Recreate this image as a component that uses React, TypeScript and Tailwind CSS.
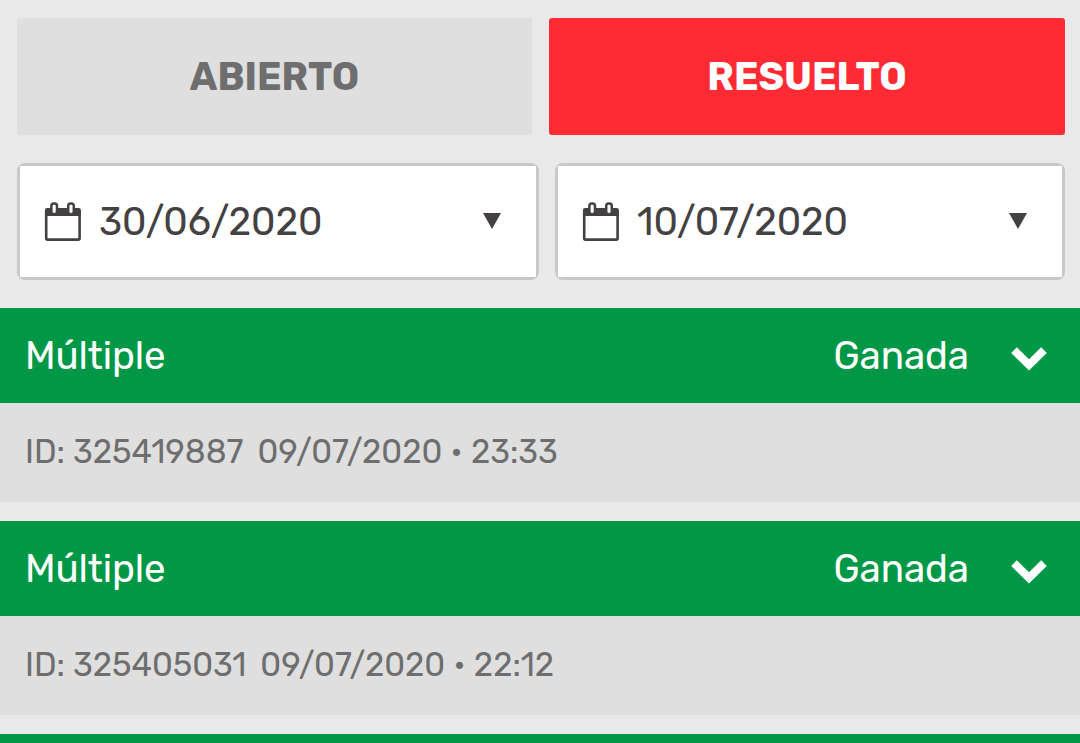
import React from 'react';

const bets = [
  { id: '325419887', date: '09/07/2020', time: '23:33', type: 'Múltiple', status: 'Ganada' },
  { id: '325405031', date: '09/07/2020', time: '22:12', type: 'Múltiple', status: 'Ganada' },
  { id: '', date: '', time: '', type: '', status: '' },
];

function CalendarIcon() {
  return (
    <svg width="38" height="40" viewBox="0 0 38 40" className="shrink-0" fill="none">
      <rect x="2.2" y="8" width="33.4" height="29.6" rx="1.4" stroke="#434142" strokeWidth="2.6" />
      <path d="M3 6h31.8a2 2 0 0 1 2 2v6H1V8a2 2 0 0 1 2-2z" fill="#434142" />
      <rect x="7.4" y="1.6" width="5.6" height="10.6" rx="2.4" fill="#fff" stroke="#434142" strokeWidth="2.5" />
      <rect x="24.2" y="1.6" width="5.6" height="10.6" rx="2.4" fill="#fff" stroke="#434142" strokeWidth="2.5" />
    </svg>
  );
}

function DateField({ value, className }: { value: string; className: string }) {
  return (
    <button className={`h-[117px] rounded-lg bg-[#c8c8c8] p-[3px] text-[#434142] ${className}`}>
      <span className="flex h-full items-center bg-white pr-[35px] pl-6">
        <CalendarIcon />
        <span className="ml-[17px] pt-0.5 text-[38.5px] leading-none tracking-[-0.1px]">{value}</span>
        <svg width="18" height="16" viewBox="0 0 18 16" className="mb-px ml-auto" fill="#434142">
          <path d="M0 0h18L9 16z" />
        </svg>
      </span>
    </button>
  );
}

export default function App() {
  return (
    <div className="h-[743px] w-[1080px] overflow-hidden bg-[#e9e9e9] font-['Rubik','Roboto',sans-serif]">
      <div className="flex gap-[17px] pt-[18px] pr-[15px] pl-[17px]">
        <button className="h-[117px] w-[515px] rounded-[3px] bg-[#dfdfdf] pt-0.5 text-[38.5px] font-bold text-[#6e6e6e]">
          ABIERTO
        </button>
        <button className="h-[117px] w-[516px] rounded-[3px] bg-[#ff2b34] pt-0.5 text-[38.5px] font-bold text-white">
          RESUELTO
        </button>
      </div>

      <div className="flex justify-between pt-7 pr-[15px] pb-7 pl-[17px]">
        <DateField value="30/06/2020" className="w-[522px]" />
        <DateField value="10/07/2020" className="w-[510px]" />
      </div>

      {bets.map((bet, i) => (
        <div key={i} className="mb-[19px]">
          <div className="flex h-[95px] items-center bg-[#009846] pt-0.5 pr-[33px] pl-[25px] text-[38.5px] tracking-[-0.1px] text-white">
            <span>{bet.type}</span>
            <span className="ml-auto">{bet.status}</span>
            <svg width="36" height="24" viewBox="0 0 36 24" className="mt-1 ml-[42px]" fill="none">
              <path d="M3 3.2l15 14.6 15-14.6" stroke="#fff" strokeWidth="8" />
            </svg>
          </div>
          {/* bet details */}
          <div className="flex h-[99px] items-center bg-[#dfdfdf] pb-0.5 pl-[25px] text-[32.85px] text-[#6e6e6e]">
            {bet.id && (
              <>
                <span>ID: {bet.id}</span>
                <span className="ml-[14px]">{bet.date} • {bet.time}</span>
              </>
            )}
          </div>
        </div>
      ))}
    </div>
  );
}
